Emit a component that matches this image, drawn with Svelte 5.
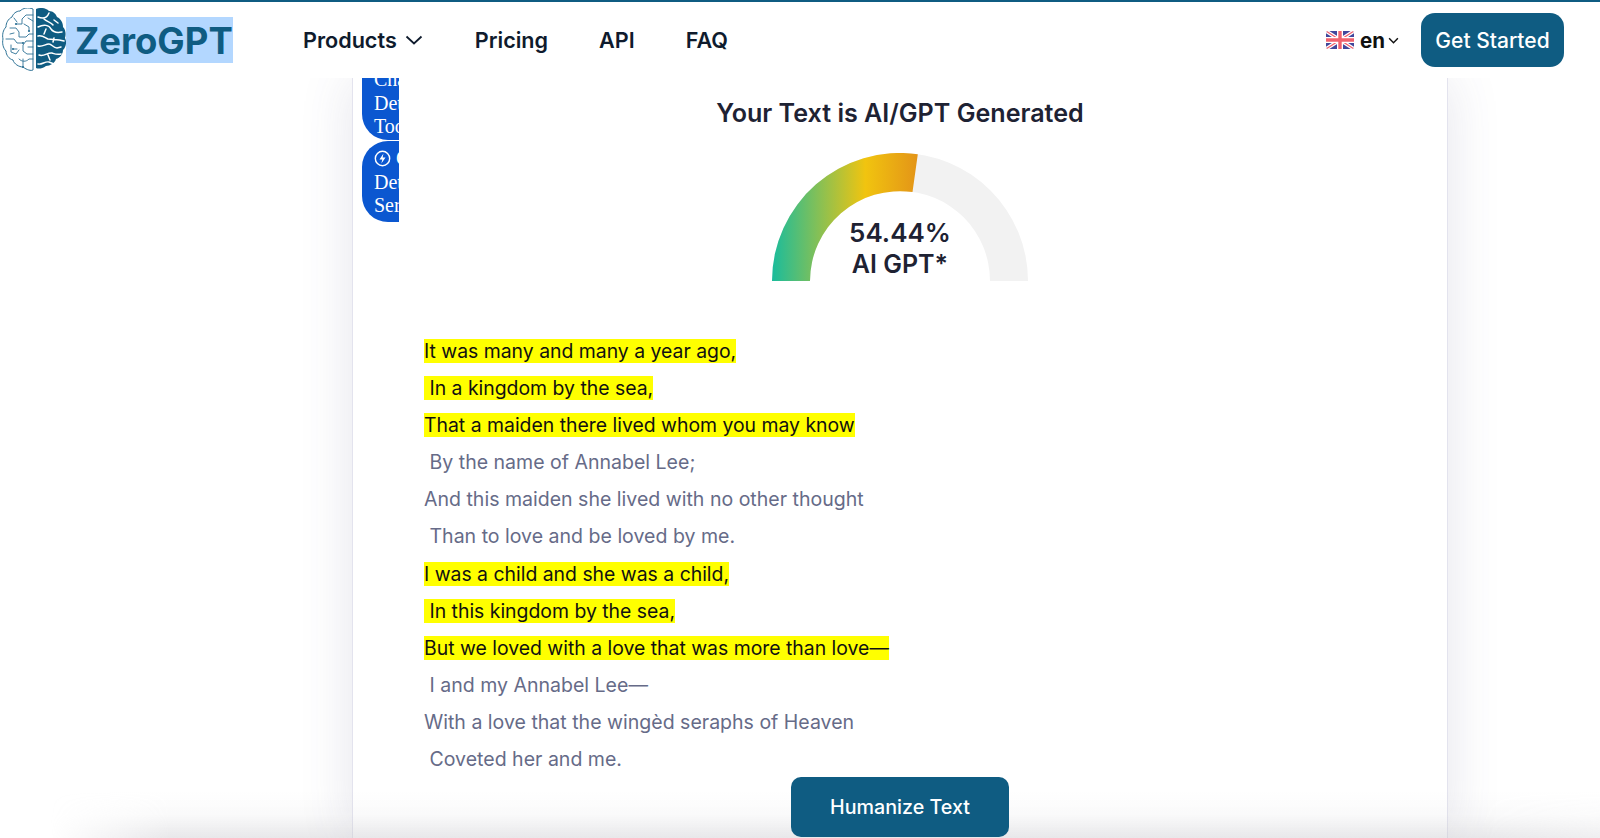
<script>
	const lines = [
		{ text: "It was many and many a year ago,", ai: true },
		{ text: " In a kingdom by the sea,", ai: true },
		{ text: "That a maiden there lived whom you may know", ai: true },
		{ text: " By the name of Annabel Lee;", ai: false },
		{ text: "And this maiden she lived with no other thought", ai: false },
		{ text: " Than to love and be loved by me.", ai: false },
		{ text: "I was a child and she was a child,", ai: true },
		{ text: " In this kingdom by the sea,", ai: true },
		{ text: "But we loved with a love that was more than love—", ai: true },
		{ text: " I and my Annabel Lee—", ai: false },
		{ text: "With a love that the wingèd seraphs of Heaven", ai: false },
		{ text: " Coveted her and me.", ai: false }
	];
</script>

<div class="page">
	<header class="topbar">
		<div class="logo">
			<svg class="brain" viewBox="0 0 64 64" width="64" height="64">
				<path d="M31 1c-5-2-10-1-13 2-4 0-7 3-8 6-4 2-6 6-6 10-3 3-4 8-3 12-1 4 0 9 3 12 0 4 3 8 7 9 1 4 6 7 10 7 4 3 8 4 10 3z" fill="#fff" stroke="#2f7396" stroke-width="1" />
				<g fill="none" stroke="#2f7396" stroke-width="0.9" stroke-linecap="round">
					<path d="M31 7h-7l-4 4v5h-6M12 10l3 4M8 20h6l3 4v5h7l3-3h4M22 16l5 3v4M4 31h8l3 4h6M31 33h-7l-3 4v6l4 3h6M9 37v7l5 2 3-4M15 41h-4M31 51h-4c-3 3-7 3-10 0M21 51v8M26 10l5 3M12 25l-4 1M26 39h5" />
				</g>
				<g fill="#2f7396">
					<circle cx="14" cy="16" r="1.1" /><circle cx="27" cy="23" r="1.1" /><circle cx="21" cy="35" r="1.1" /><circle cx="11" cy="41" r="1.1" /><circle cx="21" cy="59" r="1.1" />
				</g>
				<path d="M34 1c5-2 10-1 13 2 4 0 7 3 8 6 4 2 6 6 6 10 3 3 3 8 2 11 2 4 1 9-2 12 0 4-3 8-7 9-1 4-6 7-10 7-4 3-8 3-10 2z" fill="#0f5c82" />
				<g fill="none" stroke="#fff" stroke-width="1.5" stroke-linecap="round">
					<path d="M36 9c5 2 9 1 11-4M42 11c3 3 7 3 9 6M36 19c6-3 11-2 13 2 2 3 6 4 11 3M36 28c5-1 7 2 10 3 5 1 9 0 16 2M44 21l-2 5M52 12l4 3M36 38c5 1 7-2 11-2 3 0 4 4 8 4l4-1M37 47c5 2 9-3 13-2 3 1 5 2 9 1M36 56c4 1 7-3 11-2l5 2M46 47l2 5M52 30l-1 4" />
				</g>
			</svg>
			<span class="wordmark">ZeroGPT</span>
		</div>
		<nav class="menu">
			<span class="menu-item">Products
				<svg viewBox="0 0 18 10" width="18" height="10"><path d="M1.5 1.5 9 8.5l7.5-7" fill="none" stroke="#0f1b2d" stroke-width="1.8" /></svg>
			</span>
			<span class="menu-item">Pricing</span>
			<span class="menu-item">API</span>
			<span class="menu-item">FAQ</span>
		</nav>
		<div class="right">
			<div class="lang">
				<svg class="flag" viewBox="0 0 28 18" width="28" height="18">
					<rect width="28" height="18" rx="2" fill="#41479b" />
					<path d="M0 0 28 18M28 0 0 18" stroke="#fff" stroke-width="3.6" />
					<path d="M0 0 28 18M28 0 0 18" stroke="#f0616d" stroke-width="1.2" />
					<path d="M14 0v18M0 9h28" stroke="#fff" stroke-width="6" />
					<path d="M14 0v18M0 9h28" stroke="#f0616d" stroke-width="3.4" />
				</svg>
				<span>en</span>
				<svg viewBox="0 0 12 8" width="11" height="7"><path d="M1 1.5 6 6.5l5-5" fill="none" stroke="#111" stroke-width="1.7" /></svg>
			</div>
			<button class="cta">Get Started</button>
		</div>
	</header>

	<main class="card">
		<div class="pills">
			<div class="pill first">Chat<br />Detector<br />Tool</div>
			<div class="pill">
				<svg viewBox="0 0 18 18" width="17" height="17"><circle cx="9" cy="9" r="7.6" fill="none" stroke="#fff" stroke-width="1.5" /><path d="M10 3.8 5.8 10h3l-1 4.2L12.2 8h-3z" fill="#fff" /></svg> G<br />Detector<br />Service
			</div>
		</div>

		<h1>Your Text is AI/GPT Generated</h1>

		<div class="gauge">
			<svg viewBox="0 0 256 128" width="256" height="128">
				<defs>
					<linearGradient id="fill" gradientUnits="userSpaceOnUse" x1="0" y1="0" x2="146" y2="0">
						<stop offset="0" stop-color="#1abc9c" />
						<stop offset="0.64" stop-color="#f1c40f" />
						<stop offset="1" stop-color="#e39418" />
					</linearGradient>
				</defs>
				<path d="M0 128A128 128 0 0 1 256 128H218A90 90 0 0 0 38 128Z" fill="#f2f2f2" />
				<path d="M0 128A128 128 0 0 1 145.8 1.2L140.5 39A90 90 0 0 0 38 128Z" fill="url(#fill)" />
			</svg>
			<div class="score">54.44%<br /><span>AI GPT*</span></div>
		</div>

		<div class="poem">
			{#each lines as line}
				<p><span class:ai={line.ai}>{line.text}</span></p>
			{/each}
		</div>

		<button class="humanize">Humanize Text</button>
	</main>

	<div class="bottom-shade"></div>
</div>

<style>
	:global(body) {
		margin: 0;
		background: #fff;
		font-family: Inter, "Liberation Sans", sans-serif;
	}

	.page {
		position: relative;
		height: 838px;
		overflow: hidden;
		display: flex;
		flex-direction: column;
	}

	.topbar {
		position: relative;
		z-index: 2;
		flex: none;
		height: 76px;
		display: flex;
		align-items: center;
		background: #fff;
		border-top: 2px solid #0f5c82;
		padding-left: 2px;
		padding-right: 36px;
	}

	.logo {
		display: flex;
		align-items: center;
		width: 301px;
	}

	.brain {
		flex: none;
	}

	.wordmark {
		box-sizing: border-box;
		width: 167px;
		height: 46px;
		background: #b3d7ff;
		color: #0f5c82;
		font-size: 36.5px;
		font-weight: 700;
		line-height: 48px;
		padding-left: 9px;
		white-space: nowrap;
	}

	.menu {
		display: flex;
		align-items: center;
		gap: 51px;
	}

	.menu-item {
		display: flex;
		align-items: center;
		gap: 8px;
		font-size: 21.6px;
		font-weight: 600;
		color: #0f1b2d;
	}

	.menu-item:first-child {
		margin-right: 1px;
	}

	.right {
		margin-left: auto;
		display: flex;
		align-items: center;
		gap: 22px;
	}

	.lang {
		display: flex;
		align-items: center;
		gap: 6px;
		font-size: 20.5px;
		font-weight: 700;
		color: #111;
	}

	.lang span {
		margin-right: -3px;
	}

	.flag {
		border-radius: 2px;
	}

	.cta {
		width: 143px;
		height: 54px;
		border: none;
		border-radius: 14px;
		background: #0f5c82;
		color: #fff;
		font: 500 21px Inter, "Liberation Sans", sans-serif;
	}

	.card {
		position: relative;
		flex: 1;
		box-sizing: border-box;
		width: 1096px;
		margin-left: 352px;
		padding-top: 19px;
		background: #fff;
		border-left: 1px solid #e3e3ee;
		border-right: 1px solid #e3e3ee;
		box-shadow: 0 0 50px rgba(70, 70, 120, 0.14);
		display: flex;
		flex-direction: column;
		align-items: center;
	}

	.pills {
		position: absolute;
		top: -10px;
		left: 9px;
		width: 37px;
		overflow: hidden;
	}

	.pill {
		box-sizing: border-box;
		width: 74px;
		height: 81px;
		margin-top: 1px;
		padding: 6px 0 0 12px;
		border-radius: 26px;
		background: #0b57d0;
		color: #fff;
		font-family: "Liberation Serif", serif;
		font-size: 20px;
		line-height: 23.5px;
		white-space: nowrap;
	}

	.pill svg {
		vertical-align: -2px;
	}

	.pill.first {
		height: 72px;
		margin-top: 0;
		padding-top: 0;
		border-radius: 0 0 26px 26px;
	}

	h1 {
		margin: 0;
		font-size: 25.1px;
		font-weight: 600;
		line-height: 32px;
		color: #1e2233;
	}

	.gauge {
		position: relative;
		width: 256px;
		height: 128px;
		margin-top: 24px;
	}

	.gauge svg {
		display: block;
	}

	.score {
		position: absolute;
		left: 0;
		right: 0;
		bottom: 1px;
		text-align: center;
		font-size: 26px;
		font-weight: 600;
		line-height: 31px;
		color: #1e2233;
	}

	.score span {
		font-size: 25px;
	}

	.poem {
		align-self: stretch;
		margin-top: 52px;
		padding-left: 71px;
	}

	.poem p {
		margin: 0;
		height: 37.1px;
		line-height: 37px;
		font-size: 19.55px;
		color: #666b88;
		white-space: pre;
	}

	.ai {
		background: #ffff00;
		color: #111;
		font-size: 19.4px;
	}

	.humanize {
		position: relative;
		z-index: 2;
		flex: none;
		width: 218px;
		height: 60px;
		margin-top: -1px;
		border: none;
		border-radius: 10px;
		background: #0f5c82;
		color: #fff;
		font: 500 19.7px Inter, "Liberation Sans", sans-serif;
	}

	.bottom-shade {
		position: absolute;
		left: 0;
		right: 0;
		bottom: 0;
		height: 46px;
		z-index: 1;
		pointer-events: none;
		background: linear-gradient(to bottom, rgba(200, 200, 205, 0), rgba(200, 200, 205, 0.1) 50%, rgba(200, 200, 205, 0.42));
		mask-image: linear-gradient(to right, transparent 50px, #000 170px, #000 1480px, rgba(0, 0, 0, 0.7));
	}
</style>
